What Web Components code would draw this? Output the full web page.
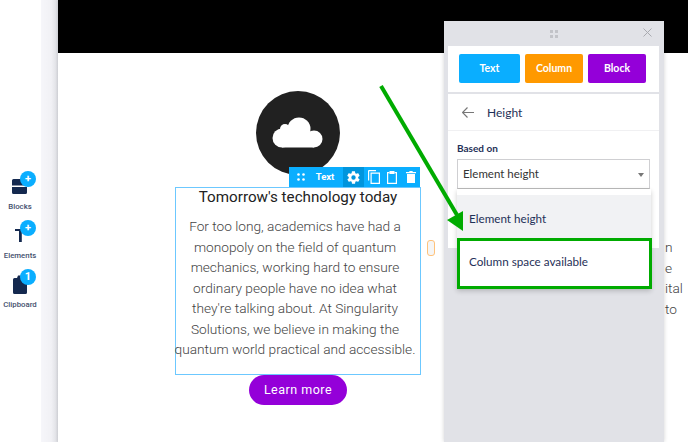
<!DOCTYPE html>
<html>
<head>
<meta charset="utf-8">
<style>
  html, body { margin: 0; height: 100%; overflow: hidden; background: #fff; }
  body { font-family: Roboto, sans-serif; }
</style>
</head>
<body>
<editor-app>
  <side-rail slot="rail">
    <rail-item label="Blocks" badge="+">
      <svg width="15" height="15" viewBox="0 0 15 15"><path fill="#14294f" d="M0 1.500Q0 0 1.500 0h12Q15 0 15 1.500V6.500H0zM0 8h15v5.500q0 1.500-1.500 1.500h-12Q0 15 0 13.500z"/></svg>
    </rail-item>
    <rail-item label="Elements" badge="+">
      <svg style="margin-bottom:1px" width="10" height="13" viewBox="0 0 10 13"><path fill="#14294f" d="M0 0h10v2H6.800v11H4V2H0z"/></svg>
    </rail-item>
    <rail-item label="Clipboard" badge="1">
      <svg style="margin-bottom:-2px" width="14" height="19" viewBox="0 0 14 19"><path fill="#14294f" d="M1.500 3H4l1-2.500h4L10 3h2.500Q14 3 14 4.500v13q0 1.500-1.500 1.500h-11Q0 19 0 17.500v-13Q0 3 1.500 3z"/></svg>
    </rail-item>
  </side-rail>
  <page-canvas slot="page">
    <hero-column>
      <text-block>
        <h2 slot="title">Tomorrow's technology today</h2>
        For too long, academics have had a monopoly on the field of quantum mechanics, working hard to ensure ordinary people have no idea what they're talking about. At Singularity Solutions, we believe in making the quantum world practical and accessible.
      </text-block>
    </hero-column>
    <side-text>n<br>e<br>ital<br>to</side-text>
    <height-panel></height-panel>
    <callout-arrow></callout-arrow>
  </page-canvas>
</editor-app>

<script>
class EditorApp extends HTMLElement {
  constructor() {
    super();
    this.attachShadow({ mode: "open" });
    this.shadowRoot.innerHTML = `
      <style>
        :host { display: flex; width: 688px; height: 442px; overflow: hidden; }
        .gutter { width: 17px; flex: none; background: linear-gradient(to right, #f6f6fa 0, #f1f1f5 60%, #dcdde2 100%); }
      </style>
      <slot name="rail"></slot>
      <div class="gutter"></div>
      <slot name="page"></slot>
    `;
  }
}

class SideRail extends HTMLElement {
  constructor() {
    super();
    this.attachShadow({ mode: "open" });
    this.shadowRoot.innerHTML = `
      <style>
        :host { display: flex; flex-direction: column; gap: 11px; width: 41px; flex: none; padding-top: 171px; box-sizing: border-box; background: #fff; }
      </style>
      <slot></slot>
    `;
  }
}

class RailItem extends HTMLElement {
  constructor() {
    super();
    this.attachShadow({ mode: "open" });
    this.shadowRoot.innerHTML = `
      <style>
        :host { display: flex; flex-direction: column; align-items: center; width: 40px; height: 38px; position: relative; }
        .icon { height: 23px; flex: none; display: flex; align-items: flex-end; margin-right: 1px; }
        .badge { position: absolute; left: 20px; top: 0; width: 16px; height: 16px; border-radius: 50%; background: #0aaeff; color: #fff; font: 700 11px/16px Roboto, sans-serif; text-align: center; }
        .label { flex: none; font: 500 7.800px/12px Roboto, sans-serif; color: #44506e; margin-top: 6.500px; white-space: nowrap; }
      </style>
      <div class="icon"><slot></slot></div>
      <div class="badge"></div>
      <div class="label"></div>
    `;
  }
  connectedCallback() {
    this.shadowRoot.querySelector(".badge").textContent = this.getAttribute("badge");
    this.shadowRoot.querySelector(".label").textContent = this.getAttribute("label");
  }
}

class PageCanvas extends HTMLElement {
  constructor() {
    super();
    this.attachShadow({ mode: "open" });
    this.shadowRoot.innerHTML = `
      <style>
        :host { display: block; flex: 1; position: relative; background: #fff; box-shadow: -1px 0 2px rgba(0,0,0,.08); }
        .header { height: 53px; background: #000; }
      </style>
      <div class="header"></div>
      <slot></slot>
    `;
  }
}

class HeroColumn extends HTMLElement {
  constructor() {
    super();
    this.attachShadow({ mode: "open" });
    this.shadowRoot.innerHTML = `
      <style>
        :host { display: flex; flex-direction: column; align-items: center; width: 246px; margin-left: 117px; padding-top: 38px; }
        .circle { width: 84px; height: 84px; border-radius: 50%; background: #212121; display: flex; align-items: center; justify-content: center; margin-bottom: 12px; }
        .cta { width: 98px; height: 30px; border-radius: 15px; background: #9400d9; color: #fff; font: 400 12.500px/30px Roboto, sans-serif; letter-spacing: .5px; text-align: center; }
      </style>
      <div class="circle">
        <svg width="52" height="32" viewBox="0 0 52 32" fill="#fff"><circle cx="10" cy="21" r="9.500"/><circle cx="13" cy="12" r="5"/><circle cx="27" cy="12" r="11.500"/><circle cx="42" cy="22" r="8.500"/><path d="M10 20h32v10.500H10z"/></svg>
      </div>
      <slot></slot>
      <div class="cta">Learn more</div>
    `;
  }
}

class TextBlock extends HTMLElement {
  constructor() {
    super();
    this.attachShadow({ mode: "open" });
    this.shadowRoot.innerHTML = `
      <style>
        :host { display: block; position: relative; width: 246px; height: 188px; box-sizing: border-box; border: 1px solid #6cc8ff; text-align: center; color: #444; font: 300 13.700px/20.500px Roboto, sans-serif; }
        ::slotted(h2) { margin: 0 0 9px; font: 400 15.200px/19px Roboto, sans-serif; color: #222; }
        .body { margin-left: -3px; margin-right: 3px; }
        .toolbar { position: absolute; left: 113px; top: -21px; width: 131px; height: 20px; background: #0aaeff; display: flex; align-items: center; color: #fff; }
        .grip { width: 24px; display: flex; justify-content: center; }
        .name { font: 700 9.500px/20px Roboto, sans-serif; width: 24px; margin-right: 6px; text-align: center; }
        .tool { display: flex; align-items: center; justify-content: center; height: 20px; }
        .tool.on { width: 21px; box-sizing: border-box; background: #0095dd; }
        .copy { margin-left: 4px; }
        .paste { margin-left: 7px; }
        .trash { margin-left: 9px; }
        svg { display: block; fill: #fff; }
      </style>
      <div class="toolbar">
        <div class="grip"><svg width="8" height="8" viewBox="0 0 8 8"><circle cx="1.500" cy="1.500" r="1.300"/><circle cx="6.500" cy="1.500" r="1.300"/><circle cx="1.500" cy="6.500" r="1.300"/><circle cx="6.500" cy="6.500" r="1.300"/></svg></div>
        <div class="name">Text</div>
        <div class="tool on"><svg width="15" height="15" viewBox="0 0 24 24"><path d="M19.400 13c.1-.3.1-.7.100-1s0-.7-.1-1l2.100-1.600c.2-.2.200-.4.100-.6l-2-3.500c-.1-.2-.4-.3-.6-.2l-2.500 1c-.5-.4-1.100-.7-1.700-1l-.4-2.600c0-.3-.2-.5-.5-.5h-4c-.3 0-.5.200-.5.400l-.4 2.700c-.6.200-1.100.6-1.700 1l-2.500-1c-.2-.1-.5 0-.6.200l-2 3.500c-.1.200-.1.500.1.600L4.500 11c0 .3-.1.700-.1 1s0 .7.100 1l-2.100 1.600c-.2.200-.2.400-.1.600l2 3.500c.1.200.4.300.6.200l2.500-1c.5.400 1.100.7 1.700 1l.4 2.600c0 .3.200.5.500.5h4c.3 0 .5-.2.500-.4l.4-2.700c.6-.2 1.100-.6 1.700-1l2.500 1c.2.100.5 0 .6-.2l2-3.500c.1-.2.100-.5-.1-.6zM12 15.500a3.500 3.500 0 1 1 0-7 3.500 3.500 0 0 1 0 7z"/></svg></div>
        <div class="tool copy"><svg width="12" height="14" viewBox="0 0 12 14"><path fill="none" stroke="#fff" stroke-width="1.200" d="M.6 10.500V1q0-.4.400-.4h7M3.100 3.100h8.300v10.300H3.100z"/></svg></div>
        <div class="tool paste"><svg width="10" height="13" viewBox="0 0 10 13"><path fill="none" stroke="#fff" stroke-width="1.200" d="M2.500 1.600H.6v10.800h8.800V1.600H7.500"/><path d="M2.500 0h5v3h-5z"/></svg></div>
        <div class="tool trash"><svg width="10" height="12" viewBox="0 0 10 12"><path d="M1 3h8v9H1zM0 1h3L3.700 0h2.600L7 1h3v1.200H0z"/></svg></div>
      </div>
      <slot name="title"></slot>
      <div class="body"><slot></slot></div>
    `;
  }
}

class SideText extends HTMLElement {
  constructor() {
    super();
    this.attachShadow({ mode: "open" });
    this.shadowRoot.innerHTML = `
      <style>
        :host { display: block; position: absolute; left: 607px; top: 237px; color: #444; font: 300 13.700px/20.500px Roboto, sans-serif; }
      </style>
      <slot></slot>
    `;
  }
}

class HeightPanel extends HTMLElement {
  constructor() {
    super();
    this.attachShadow({ mode: "open" });
    this.shadowRoot.innerHTML = `
      <style>
        :host { display: block; position: absolute; left: 386px; top: 21px; width: 220px; height: 421px; box-sizing: border-box; padding: 0 5px 0 4px; background: #e1e2e7; box-shadow: 0 0 4px rgba(0,0,0,.18); color: #1f3158; font-family: Lato, sans-serif; }
        .bar { height: 25px; display: flex; align-items: center; justify-content: center; position: relative; }
        .close { position: absolute; right: 7px; top: 7px; }
        .modes { background: #fff; height: 46px; padding: 8px 12px 0 11px; box-sizing: border-box; display: flex; gap: 5px; margin-bottom: 2px; }
        .mode { height: 29px; border-radius: 2px; color: #fff; font: 700 10.500px/29px Lato, sans-serif; text-align: center; }
        .text { width: 61px; background: #0aaeff; }
        .column { width: 58px; background: #ff9900; }
        .block { width: 58px; background: #9400d9; }
        .form { background: #fff; height: 154px; }
        .title { height: 36px; border-bottom: 1px solid #f0f0f2; display: flex; align-items: center; padding-left: 14px; gap: 13px; font: 400 12px Lato, sans-serif; }
        .field { padding: 10px 9px 0; }
        label { display: block; font: 700 10px/14px Lato, sans-serif; margin-bottom: 4px; }
        .select { height: 30px; box-sizing: border-box; border: 1px solid #cfcfd2; border-bottom-color: #bbb; padding-left: 5px; font: 400 11.500px/28px Lato, sans-serif; color: #333; position: relative; }
        .caret { position: absolute; right: 5px; top: 13px; width: 0; height: 0; border: 3.500px solid transparent; border-top: 4px solid #777; border-bottom: 0; }
        .menu { position: absolute; left: 13px; top: 168px; width: 194px; height: 100px; background: #fff; box-shadow: 0 2px 5px rgba(0,0,0,.2); }
        .opt { font: 400 11.700px/14px Lato, sans-serif; }
        .cur { margin-top: 6px; height: 43px; line-height: 47px; background: #f1f2f4; padding-left: 12px; }
        .hi { box-sizing: border-box; height: 51px; width: 195px; border: 3px solid #00ab00; background: #fff; padding-left: 9px; line-height: 41px; }
      </style>
      <div class="bar">
        <svg width="8" height="8" viewBox="0 0 8 8" fill="#c2c3c8"><rect width="3" height="3"/><rect x="5" width="3" height="3"/><rect y="5" width="3" height="3"/><rect x="5" y="5" width="3" height="3"/></svg>
        <svg class="close" width="9" height="9" viewBox="0 0 9 9"><path stroke="#a9aab0" stroke-width="1" d="M.5.500l8 8M8.500.500l-8 8"/></svg>
      </div>
      <div class="modes">
        <div class="mode text">Text</div>
        <div class="mode column">Column</div>
        <div class="mode block">Block</div>
      </div>
      <div class="form">
        <div class="title">
          <svg width="12" height="11" viewBox="0 0 12 11"><path fill="none" stroke="#777" stroke-width="1.200" d="M12 5.500H1M5.500.500l-5 5 5 5"/></svg>
          <span>Height</span>
        </div>
        <div class="field">
          <label>Based on</label>
          <div class="select">Element height<span class="caret"></span></div>
        </div>
      </div>
      <div class="menu">
        <div class="opt cur">Element height</div>
        <div class="opt hi">Column space available</div>
      </div>
    `;
  }
}

class CalloutArrow extends HTMLElement {
  constructor() {
    super();
    this.attachShadow({ mode: "open" });
    this.shadowRoot.innerHTML = `
      <style>
        :host { display: contents; }
        svg { position: absolute; left: -58px; top: 0; pointer-events: none; }
        .handle { position: absolute; left: 369px; top: 240px; width: 8px; height: 16px; box-sizing: border-box; border: 1px solid #ffc27a; border-radius: 3px; background: #f5f5f5; }
      </style>
      <div class="handle"></div>
      <svg width="688" height="442" viewBox="0 0 688 442">
        <path stroke="#00ab00" stroke-width="4" fill="none" d="M381 86L457 215"/>
        <path fill="#00ab00" d="M463 211L463 231L447 220z"/>
      </svg>
    `;
  }
}

customElements.define("editor-app", EditorApp);
customElements.define("side-rail", SideRail);
customElements.define("rail-item", RailItem);
customElements.define("page-canvas", PageCanvas);
customElements.define("hero-column", HeroColumn);
customElements.define("text-block", TextBlock);
customElements.define("side-text", SideText);
customElements.define("height-panel", HeightPanel);
customElements.define("callout-arrow", CalloutArrow);
</script>
</body>
</html>
